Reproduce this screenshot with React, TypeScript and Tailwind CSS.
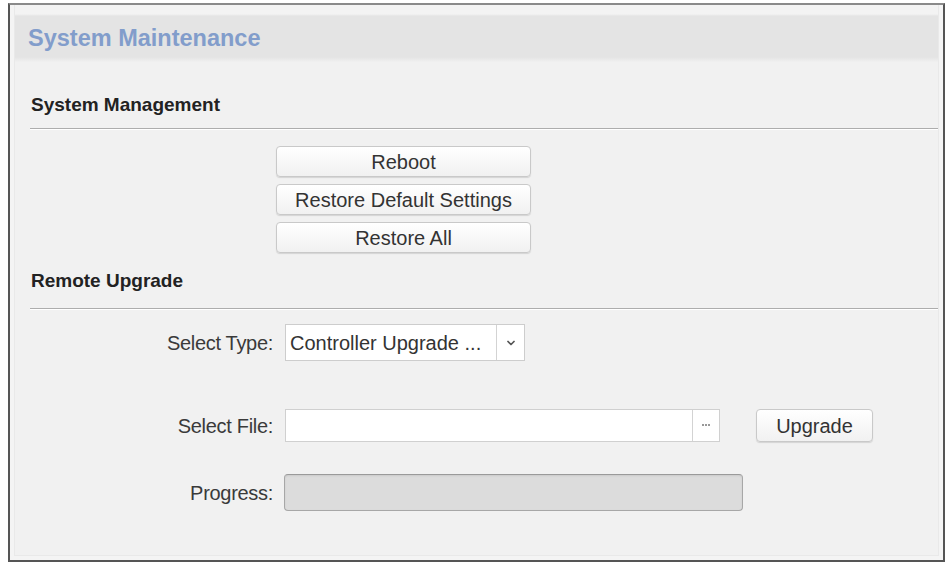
import { ChevronDown } from 'lucide-react'

function PlainButton({ label, className }: { label: string; className: string }) {
  return (
    <button
      className={`${className} rounded-[4px] border border-[#c9c9c9] bg-[linear-gradient(to_bottom,#ffffff,#f1f1f1)] text-[20px] leading-none text-[#333] shadow-[0_1px_1px_rgba(0,0,0,0.12)]`}
    >
      {label}
    </button>
  )
}

function FieldRow({ label, children, className }: { label: string; children: React.ReactNode; className: string }) {
  return (
    <div className={`flex items-center ${className}`}>
      <span className="w-[258px] shrink-0 text-right text-[20px] tracking-[-0.3px] text-[#3a3a3a]">{label}</span>
      <div className="ml-[12px] flex items-center">{children}</div>
    </div>
  )
}

function SectionTitle({ title, className }: { title: string; className: string }) {
  return <h3 className={`pl-[16px] text-[19px] leading-[22px] font-bold text-[#222] ${className}`}>{title}</h3>
}

function Divider({ className }: { className: string }) {
  return <div className={`ml-[15px] border-t border-[#adadad] shadow-[0_1px_0_#ffffff] ${className}`} />
}

export default function App() {
  return (
    <div className="w-[948px] h-[562px] bg-white overflow-hidden font-['Liberation_Sans',Arial,sans-serif]">
      <div className="ml-[8px] mt-[3px] w-[937px] h-[559px] border-2 border-[#555] border-t-[#8a8a8a] bg-[#f4f4f4] px-[4px] pb-[4px] flex flex-col">
        <div className="flex-1 bg-[#f1f1f1] border-x border-b border-[#e9e9e9] flex flex-col">
          {/* Header */}
          <div className="h-[57px] shrink-0 pt-[20px] pl-[13px] bg-[linear-gradient(to_bottom,#f3f3f3_0px,#f3f3f3_9px,#e4e4e4_11px,#e4e4e4_52px,#f0f0f0_57px)]">
            <h2 className="text-[23.5px] leading-[26px] font-bold text-[#829dcb]">System Maintenance</h2>
          </div>

          {/* System Management */}
          <SectionTitle title="System Management" className="mt-[32px]" />
          <Divider className="mt-[12px]" />
          <div className="ml-[261px] mt-[17px] flex flex-col gap-[7px]">
            <PlainButton label="Reboot" className="w-[255px] h-[31px]" />
            <PlainButton label="Restore Default Settings" className="w-[255px] h-[31px]" />
            <PlainButton label="Restore All" className="w-[255px] h-[31px]" />
          </div>

          {/* Remote Upgrade */}
          <SectionTitle title="Remote Upgrade" className="mt-[17px]" />
          <Divider className="mt-[16px]" />

          <FieldRow label="Select Type:" className="mt-[15px]">
            <div className="w-[240px] h-[37px] flex border border-[#cdcdcd] bg-white">
              <span className="flex-1 pl-[4px] flex items-center text-[20px] text-[#333] whitespace-nowrap overflow-hidden">
                Controller Upgrade ...
              </span>
              <span className="w-[28px] border-l border-[#d3d3d3] flex items-center justify-center text-[#555]">
                <ChevronDown size={12} strokeWidth={3.5} />
              </span>
            </div>
          </FieldRow>

          <FieldRow label="Select File:" className="mt-[48px]">
            <div className="w-[435px] h-[33px] flex border border-[#d0d0d0] bg-white">
              <span className="flex-1" />
              <span className="w-[27px] border-l border-[#d3d3d3] flex items-center justify-center gap-[1px] pb-[2px]">
                <span className="w-[2px] h-[2px] rounded-full bg-[#777]" />
                <span className="w-[2px] h-[2px] rounded-full bg-[#777]" />
                <span className="w-[2px] h-[2px] rounded-full bg-[#777]" />
              </span>
            </div>
            <PlainButton label="Upgrade" className="ml-[36px] w-[117px] h-[33px]" />
          </FieldRow>

          <FieldRow label="Progress:" className="mt-[32px]">
            <div className="-ml-[1px] w-[459px] h-[37px] rounded-[4px] border border-[#a7a7a7] border-t-[#9a9a9a] bg-[#dcdcdc] shadow-[inset_0_1px_2px_rgba(0,0,0,0.08)]" />
          </FieldRow>
        </div>
      </div>
    </div>
  )
}
